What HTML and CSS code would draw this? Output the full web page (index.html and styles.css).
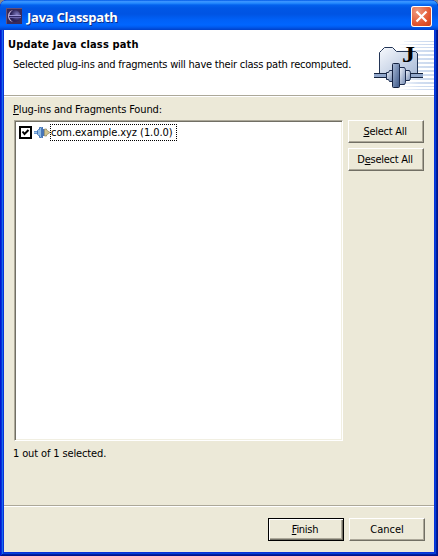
FILE: index.html
```html
<!DOCTYPE html>
<html lang="en">
<head>
<meta charset="utf-8">
<title>Java Classpath</title>
<link rel="stylesheet" href="styles.css">
</head>
<body>
<div class="window">
  <div class="titlebar">
    <svg class="app-icon" width="16" height="16" viewBox="0 0 16 16">
      <defs><radialGradient id="moon" cx=".7" cy=".4"><stop offset="0" stop-color="#8580c4"/><stop offset="1" stop-color="#292158"/></radialGradient></defs>
      <rect width="16" height="16" fill="#3b2b58"/>
      <path d="M0 .5h16M.5 0v16" stroke="#655078"/>
      <circle cx="8.500" cy="8" r="6" fill="url(#moon)"/>
      <path d="M7 2C3 3 2 6 2 8s1 5 5 6C4 12 3.500 10 3.500 8S4 4 7 2z" fill="#b9a9d0"/>
      <path d="M3 7.500h12" stroke="#9d97d8"/><path d="M3 8.500h12" stroke="#302965"/><path d="M3 9.500h12" stroke="#6f68ac"/>
    </svg>
    <span class="title">Java Classpath</span>
    <div class="close"><svg width="21" height="21" viewBox="0 0 21 21"><path d="M5.500 5.500l10 10m0-10l-10 10" stroke="#fff" stroke-width="2.200"/></svg></div>
  </div>
  <div class="client">
    <div class="header">
      <div class="heading-text">
        <div class="heading">Update Java class path</div>
        <div class="description">Selected plug-ins and fragments will have their class path recomputed.</div>
      </div>
      <svg class="banner" width="62" height="64" viewBox="372 31 62 64">
        <defs>
          <linearGradient id="fade" gradientUnits="userSpaceOnUse" x1="396" x2="434"><stop offset="0" stop-color="#d5e1f2" stop-opacity="0"/><stop offset=".6" stop-color="#d2def1"/><stop offset="1" stop-color="#c9d8ee"/></linearGradient>
          <linearGradient id="folder" x2="1" y2="1"><stop offset="0" stop-color="#f7f9fd"/><stop offset="1" stop-color="#a4b7d5"/></linearGradient>
          <linearGradient id="metal" x2="1" y2="1"><stop offset="0" stop-color="#a9bbd8"/><stop offset="1" stop-color="#3c5787"/></linearGradient>
          <linearGradient id="light" x2="1" y2="1"><stop offset="0" stop-color="#f2f5fb"/><stop offset="1" stop-color="#7189b2"/></linearGradient>
        </defs>
        <g fill="url(#fade)">
          <rect x="404" y="41" width="30" height="1"/><rect x="400" y="44" width="34" height="1"/><rect x="400" y="47" width="34" height="1"/>
          <rect x="398" y="50" width="36" height="2"/><rect x="398" y="54" width="36" height="2"/><rect x="398" y="58" width="36" height="2"/>
          <rect x="398" y="62" width="36" height="2"/><rect x="398" y="66" width="36" height="2"/><rect x="398" y="70" width="36" height="2"/>
          <rect x="398" y="74" width="36" height="2"/><rect x="394" y="78" width="40" height="2"/><rect x="392" y="82" width="42" height="2"/>
          <rect x="394" y="86" width="40" height="1"/><rect x="400" y="89" width="34" height="1"/>
        </g>
        <path d="M379.500 77.500V52.500l2-2 3-3h8l4 4h19l2 2v24z" fill="url(#folder)" stroke="#233556"/>
        <path d="M374 75.500h49" stroke="#16243f" stroke-width="5"/>
        <path d="M374 75.500h49" stroke="#91a7cb" stroke-width="3"/>
        <path d="M386.500 72.500h2l1-2h3v11h-3l-1-2h-2z" fill="url(#light)" stroke="#1b2b4d"/>
        <rect x="392.500" y="63.500" width="7" height="24" rx="1" fill="url(#metal)" stroke="#14213f"/>
        <path d="M399.500 67.500h5l1 2v13l-1 2h-5z" fill="url(#light)" stroke="#1b2b4d"/>
        <path d="M405.500 70.500h4l1 2v6l-1 2h-4z" fill="url(#light)" stroke="#1b2b4d"/>
        <text class="banner-letter" x="402" y="62" textLength="13" lengthAdjust="spacingAndGlyphs">J</text>
      </svg>
    </div>
    <div class="content">
      <div class="label list-label"><u>P</u>lug-ins and Fragments Found:</div>
      <div class="columns">
        <div class="list">
          <div class="item">
            <svg width="13" height="13" viewBox="0 0 13 13"><rect x="1" y="1" width="11" height="11" fill="#fff" stroke="#000" stroke-width="2"/><path d="M3.500 5.500l2 2.500L9.500 4" fill="none" stroke="#000" stroke-width="2"/></svg>
            <svg class="plugin" width="16" height="14" viewBox="0 0 16 14">
              <path d="M0 6h5v3H0z" fill="#6796d0"/><path d="M0 7.500h5" stroke="#9cc4ea"/>
              <path d="M3.500 5.500l1-1h1v-2h2v10h-2v-2h-1l-1-1z" fill="#8fbbe5" stroke="#4778ba"/>
              <path d="M8 2h1v2h1.500v7H9v2H8z" fill="#4775b6"/>
              <path d="M10.500 4h2v1l3.500 2.500-3.500 2.500v1h-2z" fill="#d2c58f" stroke="#8c8560" stroke-width=".7"/>
            </svg>
            <span class="item-label">com.example.xyz (1.0.0)</span>
          </div>
        </div>
        <div class="side">
          <div class="button"><span class="select"><u>S</u>elect All</span></div>
          <div class="button"><span class="deselect">D<u>e</u>select All</span></div>
        </div>
      </div>
      <div class="status">1 out of 1 selected.</div>
    </div>
    <div class="footer">
      <div class="button default"><span class="finish"><u>F</u>inish</span></div>
      <div class="button"><span class="cancel">Cancel</span></div>
    </div>
  </div>
</div>
</body>
</html>
```
FILE: styles.css
```css
* { box-sizing: border-box; }
body {
  margin: 0;
  background: #8a8a88;
  color: #000;
  font: 11px/14px "DejaVu Sans Condensed", "DejaVu Sans", sans-serif;
  white-space: nowrap;
}
svg { display: block; flex: none; }
u { text-underline-offset: 1px; text-decoration-thickness: 1px; text-decoration-skip-ink: none; }
.window {
  width: 438px;
  height: 556px;
  padding: 0 4px 4px;
  border-radius: 7px 7px 0 0;
  background: #0831d9;
  box-shadow: inset 1px 0 #0019cf, inset -1px 0 #00138c, inset 0 -1px #00138c, inset 2px 0 #0831d9, inset -2px -2px #001ea0, inset 3px 0 #166aee, inset -3px -3px #0441d8;
  overflow: hidden;
}
.titlebar {
  display: flex;
  align-items: center;
  height: 30px;
  margin: 0 -4px;
  padding: 2px 6px 0;
  background: linear-gradient(#0058e6 0, #3a93ff 1.500px, #288eff 3px, #0362ee 5px, #0057e5 8px, #0054e3 14px, #0061f8 20px, #0066ff 25px, #005bf0 27px, #0040c8 30px);
}
.title {
  width: 330px;
  margin: 1px auto 0 5px;
  color: #fff;
  font: bold 13px/18px "Open Sans", sans-serif;
  letter-spacing: -.25px;
  text-shadow: 1px 1px #0c2f8a;
}
.close {
  width: 21px;
  height: 21px;
  border-radius: 3px;
  background: radial-gradient(circle at 30% 25%, #ee9a80, #e3552e 60%, #c53c16);
  box-shadow: inset 0 0 0 1px #fff;
}
.client { display: flex; flex-direction: column; height: 522px; background: #ece9d8; }
.header {
  display: flex;
  justify-content: space-between;
  height: 66px;
  background: #fff;
  border-bottom: 1px solid #aca899;
}
.heading-text { width: 350px; padding: 8px 0 0 4px; }
.heading { font-weight: bold; letter-spacing: .15px; }
.description { margin: 6px 0 0 5px; letter-spacing: -.225px; }
.banner { margin-top: 1px; }
.banner-letter { font: bold 24px "Liberation Serif", serif; }
.content { height: 410px; padding: 6px 10px 0; border-top: 1px solid #fff; border-bottom: 1px solid #aca899; }
.list-label { margin-left: -1px; letter-spacing: -.14px; }
.columns { display: flex; gap: 5px; margin-top: 3px; }
.list {
  width: 329px;
  height: 321px;
  padding: 2px 4px;
  background: #fff;
  border: 1px solid;
  border-color: #aca899 #fff #fff #aca899;
  box-shadow: inset 1px 1px #716f64, inset -1px -1px #f1efe2;
}
.item { display: flex; align-items: center; height: 18px; }
.plugin { margin-left: 2px; }
.item-label { height: 17px; width: 127px; padding: 1px 0; border: 1px dotted #000; letter-spacing: -.06px; }
.side { display: flex; flex-direction: column; gap: 5px; }
.button {
  display: flex;
  align-items: center;
  justify-content: center;
  width: 76px;
  height: 23px;
  border: 1px solid;
  border-color: #fff #716f64 #716f64 #fff;
  box-shadow: inset -1px -1px #aca899;
}
.select, .deselect, .finish { letter-spacing: -.27px; }
.select, .deselect { margin-right: 2px; }
.default { border-color: #000; box-shadow: inset 1px 1px #fff, inset -1px -1px #716f64, inset -2px -2px #aca899; }
.finish { margin-right: 2px; }
.status { margin: 6px 0 0 -1px; letter-spacing: -.13px; }
.footer { display: flex; justify-content: flex-end; gap: 5px; height: 46px; padding: 11px 9px 0 0; border-top: 1px solid #fff; }
```
